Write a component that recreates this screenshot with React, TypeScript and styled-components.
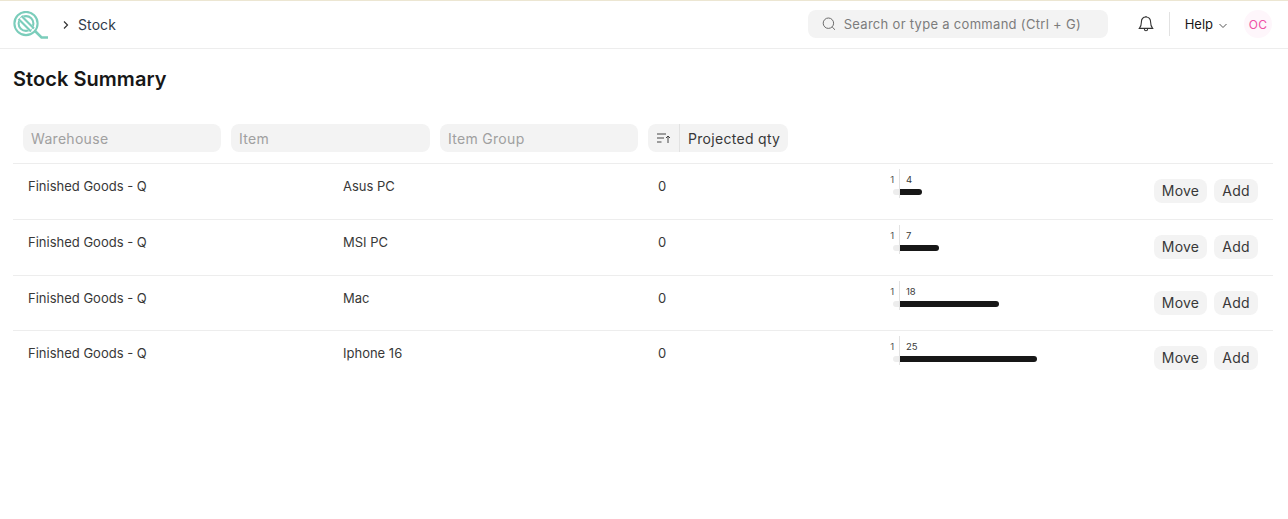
import React from 'react';
import styled, {createGlobalStyle} from "styled-components";

type StockRowType = {
    warehouse: string
    item: string
    qty: number
    reserved: number
    projected: number
    barWidth: number
    height: number
}

const rows: Array<StockRowType> = [
    {warehouse: "Finished Goods - Q", item: "Asus PC", qty: 0, reserved: 1, projected: 4, barWidth: 22, height: 56},
    {warehouse: "Finished Goods - Q", item: "MSI PC", qty: 0, reserved: 1, projected: 7, barWidth: 39, height: 56},
    {warehouse: "Finished Goods - Q", item: "Mac", qty: 0, reserved: 1, projected: 18, barWidth: 99, height: 55},
    {warehouse: "Finished Goods - Q", item: "Iphone 16", qty: 0, reserved: 1, projected: 25, barWidth: 137, height: 55},
]

const Logo = () => (
    <svg width="36" height="28" viewBox="0 0 36 28" fill="none" stroke="#7BCDBB" strokeWidth="2.1">
        <circle cx="13" cy="12.5" r="11.6" />
        <circle cx="13" cy="12.5" r="7.4" />
        <path d="M7.5 7 L18.5 18" stroke="#fff" strokeWidth="6.4" />
        <path d="M8.5 5 L21 17.5" />
        <path d="M5.5 8 L18 20.5" />
        <path d="M21.5 19.5 L28.5 26.5 L35 26.5" strokeWidth="2.6" />
    </svg>
)

const App = () => {
    return (
        <Page>
            <GlobalStyle/>
            <Navbar>
                <Breadcrumb>
                    <Logo/>
                    <Chevron viewBox="0 0 8 10">
                        <path d="M2 1.5 L5.5 5 L2 8.5" />
                    </Chevron>
                    <Crumb>Stock</Crumb>
                </Breadcrumb>
                <NavRight>
                    <SearchBox>
                        <svg width="14" height="14" viewBox="0 0 14 14" fill="none" stroke="#6b6b6b" strokeWidth="1">
                            <circle cx="6.4" cy="6.2" r="5.2" />
                            <path d="M10.2 10 L13 12.8" />
                        </svg>
                        <SearchText>Search or type a command (Ctrl + G)</SearchText>
                    </SearchBox>
                    <BellButton>
                        <svg width="16" height="18" viewBox="0 0 16 18" fill="none" stroke="#333" strokeWidth="1.1">
                            <path d="M8 2 C5 2 3.4 4.2 3.4 7 C3.4 10.5 2.6 12 1.4 13.4 H14.6 C13.4 12 12.6 10.5 12.6 7 C12.6 4.2 11 2 8 2 Z" />
                            <path d="M8 2 V1" />
                            <path d="M6.4 14 C6.4 16.4 9.6 16.4 9.6 14" />
                        </svg>
                    </BellButton>
                    <NavDivider/>
                    <HelpLink>
                        Help
                        <svg width="10" height="6" viewBox="0 0 10 6" fill="none" stroke="#555" strokeWidth="1">
                            <path d="M1.5 1 L5 4.5 L8.5 1" />
                        </svg>
                    </HelpLink>
                    <Avatar>OC</Avatar>
                </NavRight>
            </Navbar>
            <PageTitle>Stock Summary</PageTitle>
            <Filters>
                <FilterInput>Warehouse</FilterInput>
                <FilterInput>Item</FilterInput>
                <FilterInput>Item Group</FilterInput>
                <SortControl>
                    <SortIcon>
                        <svg width="15" height="12" viewBox="0 0 15 12" fill="none" stroke="#444" strokeWidth="1">
                            <path d="M1 2 H10 M1 6 H8 M1 10 H5.5" />
                            <path d="M12 11 V4 M10 6 L12 4 L14 6" />
                        </svg>
                    </SortIcon>
                    <SortLabel>Projected qty</SortLabel>
                </SortControl>
            </Filters>
            <div>
                {rows.map((row) => (
                    <Row key={row.item} $height={row.height}>
                        <Cell>{row.warehouse}</Cell>
                        <Cell>{row.item}</Cell>
                        <Cell>{row.qty}</Cell>
                        <Chart>
                            <ChartLabels>
                                <LeftLabel>{row.reserved}</LeftLabel>
                                <RightLabel>{row.projected}</RightLabel>
                            </ChartLabels>
                            <Bars>
                                <NegativeBar/>
                                <PositiveBar style={{width: row.barWidth}}/>
                            </Bars>
                        </Chart>
                        <Actions>
                            <ActionButton>Move</ActionButton>
                            <ActionButton>Add</ActionButton>
                        </Actions>
                    </Row>
                ))}
            </div>
        </Page>
    );
};

export default App;

const GlobalStyle = createGlobalStyle`
  body {
    margin: 0;
    background: #fff;
    font-family: Inter, "Liberation Sans", sans-serif;
    color: #383838;
  }
`

const Page = styled.div`
  min-height: 519px;
  border-top: 1px solid #ece6d2;
  box-sizing: border-box;
`

const Navbar = styled.header`
  height: 48px;
  box-sizing: border-box;
  border-bottom: 1px solid #ededed;
  display: flex;
  align-items: center;
  justify-content: space-between;
  padding: 0 16px 1px 13px;
`

const Breadcrumb = styled.div`
  display: flex;
  align-items: center;
  height: 28px;
  margin-top: 2px;
`

const Chevron = styled.svg`
  width: 8px;
  height: 10px;
  margin: -1px 0 0 13px;
  fill: none;
  stroke: #333;
  stroke-width: 1.2;
`

const Crumb = styled.span`
  margin: -1px 0 0 8px;
  font-size: 14px;
  letter-spacing: 0.1px;
  color: #2f3b4a;
`

const NavRight = styled.div`
  display: flex;
  align-items: center;
`

const SearchBox = styled.div`
  width: 300px;
  height: 28px;
  box-sizing: border-box;
  background: #f3f3f3;
  border-radius: 8px;
  display: flex;
  align-items: center;
  gap: 8px;
  padding-left: 14px;
`

const SearchText = styled.span`
  font-size: 13px;
  color: #7c7c7c;
  letter-spacing: 0.3px;
`

const BellButton = styled.div`
  margin-left: 30px;
  width: 16px;
  height: 18px;
`

const NavDivider = styled.div`
  width: 1px;
  height: 24px;
  background: #e2e2e2;
  margin-left: 15px;
`

const HelpLink = styled.div`
  margin-left: 15px;
  display: flex;
  align-items: center;
  gap: 5px;
  font-size: 13px;
  color: #171717;

  svg {
    margin-top: 3px;
  }
`

const Avatar = styled.div`
  margin-left: 16px;
  width: 28px;
  height: 28px;
  border-radius: 50%;
  background: #fef6fb;
  color: #ee4fa5;
  font-size: 12px;
  letter-spacing: 0.4px;
  display: flex;
  align-items: center;
  justify-content: center;
`

const PageTitle = styled.h1`
  margin: 18px 0 0 13px;
  font-size: 20px;
  line-height: 24px;
  font-weight: 600;
  letter-spacing: 0.05px;
  color: #171717;
`

const Filters = styled.div`
  display: grid;
  grid-template-columns: 198px 199px 198px 140px;
  gap: 10px;
  padding: 33px 0 11px 23px;
`

const FilterInput = styled.div`
  height: 28px;
  box-sizing: border-box;
  padding-left: 8px;
  background: #f3f3f3;
  border-radius: 8px;
  font-size: 14px;
  line-height: 30px;
  letter-spacing: 0.3px;
  color: #a0a0a0;
`

const SortControl = styled.div`
  display: flex;
  height: 28px;
  background: #f3f3f3;
  border-radius: 8px;
`

const SortIcon = styled.div`
  width: 31px;
  flex-shrink: 0;
  display: flex;
  align-items: center;
  justify-content: center;
  border-right: 1px solid #e2e2e2;
`

const SortLabel = styled.div`
  padding-left: 8px;
  white-space: nowrap;
  font-size: 14px;
  line-height: 30px;
  letter-spacing: 0.3px;
  color: #383838;
`

const Row = styled.div<{$height: number}>`
  height: ${props => props.$height}px;
  box-sizing: border-box;
  margin: 0 15px 0 13px;
  padding: 0 15px;
  border-top: 1px solid #ededed;
  display: grid;
  grid-template-columns: 315px 315px 232px 1fr auto;
`

const Cell = styled.div`
  padding-top: 15px;
  font-size: 13px;
  line-height: 15px;
  color: #383838;
`

const Chart = styled.div`
  padding-top: 5px;
  width: 150px;
`

const ChartLabels = styled.div`
  display: flex;
  height: 19px;
  font-size: 9.5px;
  line-height: 22px;
`

const LeftLabel = styled.span`
  width: 9px;
  text-align: right;
  margin-left: -5px;
  color: #525252;
`

const RightLabel = styled.span`
  margin-left: 11px;
  color: #383838;
  padding-left: 1px;
  position: relative;

  &::before {
    content: "";
    position: absolute;
    left: -6px;
    top: 0;
    height: 29px;
    width: 1px;
    background: #e2e2e2;
  }
`

const Bars = styled.div`
  display: flex;
  height: 6px;
  margin-top: 1px;
  padding-left: 3px;
  gap: 1px;
`

const NegativeBar = styled.div`
  width: 6px;
  background: #ededed;
  border-radius: 3px 0 0 3px;
`

const PositiveBar = styled.div`
  background: #171717;
  border-radius: 0 3px 3px 0;
`

const Actions = styled.div`
  display: grid;
  grid-template-columns: 53px 44px;
  gap: 7px;
  padding-top: 15px;
  align-items: start;
`

const ActionButton = styled.div`
  height: 24px;
  background: #f3f3f3;
  border-radius: 8px;
  text-align: center;
  font-size: 14px;
  line-height: 24px;
  letter-spacing: 0.2px;
  color: #383838;
`
